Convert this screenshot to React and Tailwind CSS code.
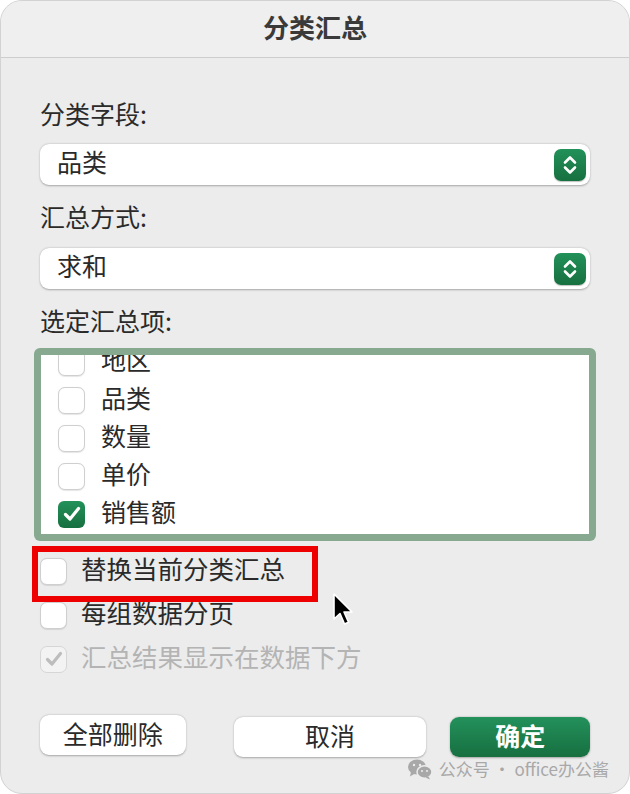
import React from "react";

const font = { fontFamily: '"Noto Sans CJK SC", "Noto Sans", sans-serif' };

const Stepper = () => (
  <div className="w-[32px] h-[32px] rounded-[7px] bg-gradient-to-b from-[#22915a] to-[#17703f] flex items-center justify-center shadow-[0_1px_1px_rgba(0,0,0,0.25)]">
    <svg width="16" height="22" viewBox="0 0 16 22" fill="none">
      <path d="M3 8.5 L8 3.5 L13 8.5" stroke="white" strokeWidth="2.6" strokeLinecap="round" strokeLinejoin="round" />
      <path d="M3 13.5 L8 18.5 L13 13.5" stroke="white" strokeWidth="2.6" strokeLinecap="round" strokeLinejoin="round" />
    </svg>
  </div>
);

const Select = ({ value }) => (
  <div className="h-[41px] bg-white rounded-[9px] shadow-[0_0.5px_2px_rgba(0,0,0,0.3)] flex items-center justify-between pl-[17px] pr-[4px]">
    <span className="text-[25px] text-[#2a2a2a] pb-[6px]">{value}</span>
    <Stepper />
  </div>
);

const Box = ({ checked, disabled }) => {
  if (checked && !disabled) {
    return (
      <div className="w-[27px] h-[27px] rounded-[6px] bg-gradient-to-b from-[#22915a] to-[#17703f] flex items-center justify-center shrink-0">
        <svg width="20" height="18" viewBox="0 0 20 18" fill="none">
          <path d="M3.5 9.5 L8 14 L16.5 3.5" stroke="white" strokeWidth="3.2" strokeLinecap="round" strokeLinejoin="round" />
        </svg>
      </div>
    );
  }
  return (
    <div
      className={
        "w-[27px] h-[27px] rounded-[7px] border flex items-center justify-center shrink-0 " +
        (disabled ? "border-[#d6d6d6] bg-[#f3f3f3]" : "border-[#cfcfcf] bg-white shadow-[0_0.5px_1px_rgba(0,0,0,0.1)]")
      }
    >
      {checked && (
        <svg width="20" height="18" viewBox="0 0 20 18" fill="none">
          <path d="M3.5 9.5 L8 14 L16.5 3.5" stroke="#bdbdbd" strokeWidth="3.2" strokeLinecap="round" strokeLinejoin="round" />
        </svg>
      )}
    </div>
  );
};

const items = [
  { label: "地区", checked: false },
  { label: "品类", checked: false },
  { label: "数量", checked: false },
  { label: "单价", checked: false },
  { label: "销售额", checked: true },
];

const options = [
  { label: "替换当前分类汇总", checked: false },
  { label: "每组数据分页", checked: false },
  { label: "汇总结果显示在数据下方", checked: true, disabled: true },
];

export default function App() {
  return (
    <div className="w-[630px] h-[794px] bg-white" style={font}>
      <div className="relative w-[630px] h-[794px] bg-[#ececec] rounded-[22px] border border-[#d2d2d2] overflow-hidden">
        <div className="h-[57px] bg-[#efefef] border-b border-[#cdcdcd] flex items-center justify-center">
          <span className="text-[26px] font-bold text-[#3a3a3a] pb-[6px]">分类汇总</span>
        </div>

        <div className="px-[39px]">
          <div className="mt-[39px] h-[32px] leading-[32px] text-[25px] text-[#2a2a2a]">分类字段:</div>
          <div className="mt-[15px]">
            <Select value="品类" />
          </div>

          <div className="mt-[15px] h-[32px] leading-[32px] text-[25px] text-[#2a2a2a]">汇总方式:</div>
          <div className="mt-[16px]">
            <Select value="求和" />
          </div>

          <div className="mt-[15px] h-[32px] leading-[32px] text-[25px] text-[#2a2a2a]">选定汇总项:</div>

          <div className="mt-[12px] -ml-[6px] w-[562px] h-[193px] rounded-[6px] bg-[#86a98f] p-[7px]">
            <div className="h-full bg-white overflow-hidden">
              <div className="-mt-[12px] pl-[17px]">
                {items.map((it) => (
                  <div key={it.label} className="h-[38px] flex items-center gap-[16px]">
                    <Box checked={it.checked} />
                    <span className="text-[25px] text-[#2a2a2a] pb-[4px]">{it.label}</span>
                  </div>
                ))}
              </div>
            </div>
          </div>

          <div className="mt-[8px]">
            {options.map((o) => (
              <div key={o.label} className="h-[44px] flex items-center gap-[14px]">
                <Box checked={o.checked} disabled={o.disabled} />
                <span className={"text-[25.5px] pb-[5px] " + (o.disabled ? "text-[#b4b4b4]" : "text-[#2a2a2a]")}>{o.label}</span>
              </div>
            ))}
          </div>

          <div className="mt-[34px] flex items-start">
            <button className="w-[146px] h-[40px] pb-[6px] bg-white rounded-[9px] shadow-[0_0.5px_2px_rgba(0,0,0,0.3)] text-[25px] text-[#2a2a2a]">
              全部删除
            </button>
            <button className="ml-[48px] mt-[2px] w-[193px] h-[40px] pb-[6px] bg-white rounded-[9px] shadow-[0_0.5px_2px_rgba(0,0,0,0.3)] text-[25px] text-[#2a2a2a]">
              取消
            </button>
            <button className="ml-[24px] mt-[2px] w-[140px] h-[40px] pb-[6px] rounded-[9px] bg-gradient-to-b from-[#23915b] to-[#176f40] text-[25px] font-bold text-white shadow-[0_0.5px_2px_rgba(0,0,0,0.3)]">
              确定
            </button>
          </div>
        </div>

        <div className="absolute left-[31px] top-[545px] w-[286px] h-[56px] border-[6px] border-[#ee0000]" />

        <svg className="absolute left-[330px] top-[591px]" width="26" height="36" viewBox="0 0 26 36">
          <path d="M3 2 L3 27 L9 21.5 L13.5 32 L17.5 30.3 L13 20 L21 20 Z" fill="black" stroke="white" strokeWidth="1.6" strokeLinejoin="round" />
        </svg>

        <div className="absolute right-[20px] top-[755px] flex items-center gap-[6px] text-[17px] text-[#a8a8a8]">
          <svg width="26" height="22" viewBox="0 0 26 22">
            <ellipse cx="10" cy="9" rx="9" ry="7.5" fill="#a8a8a8" />
            <path d="M4 14 L3 18.5 L8 15.5 Z" fill="#a8a8a8" />
            <ellipse cx="17.5" cy="14" rx="7.5" ry="6.2" fill="#a8a8a8" stroke="#ececec" strokeWidth="1.5" />
            <path d="M21.5 18.5 L23 21.5 L18.5 19.5 Z" fill="#a8a8a8" />
            <circle cx="7" cy="7" r="1.2" fill="#ececec" />
            <circle cx="13" cy="7" r="1.2" fill="#ececec" />
            <circle cx="15" cy="13" r="1" fill="#ececec" />
            <circle cx="20" cy="13" r="1" fill="#ececec" />
          </svg>
          <span>公众号 · office办公酱</span>
        </div>
      </div>
    </div>
  );
}
